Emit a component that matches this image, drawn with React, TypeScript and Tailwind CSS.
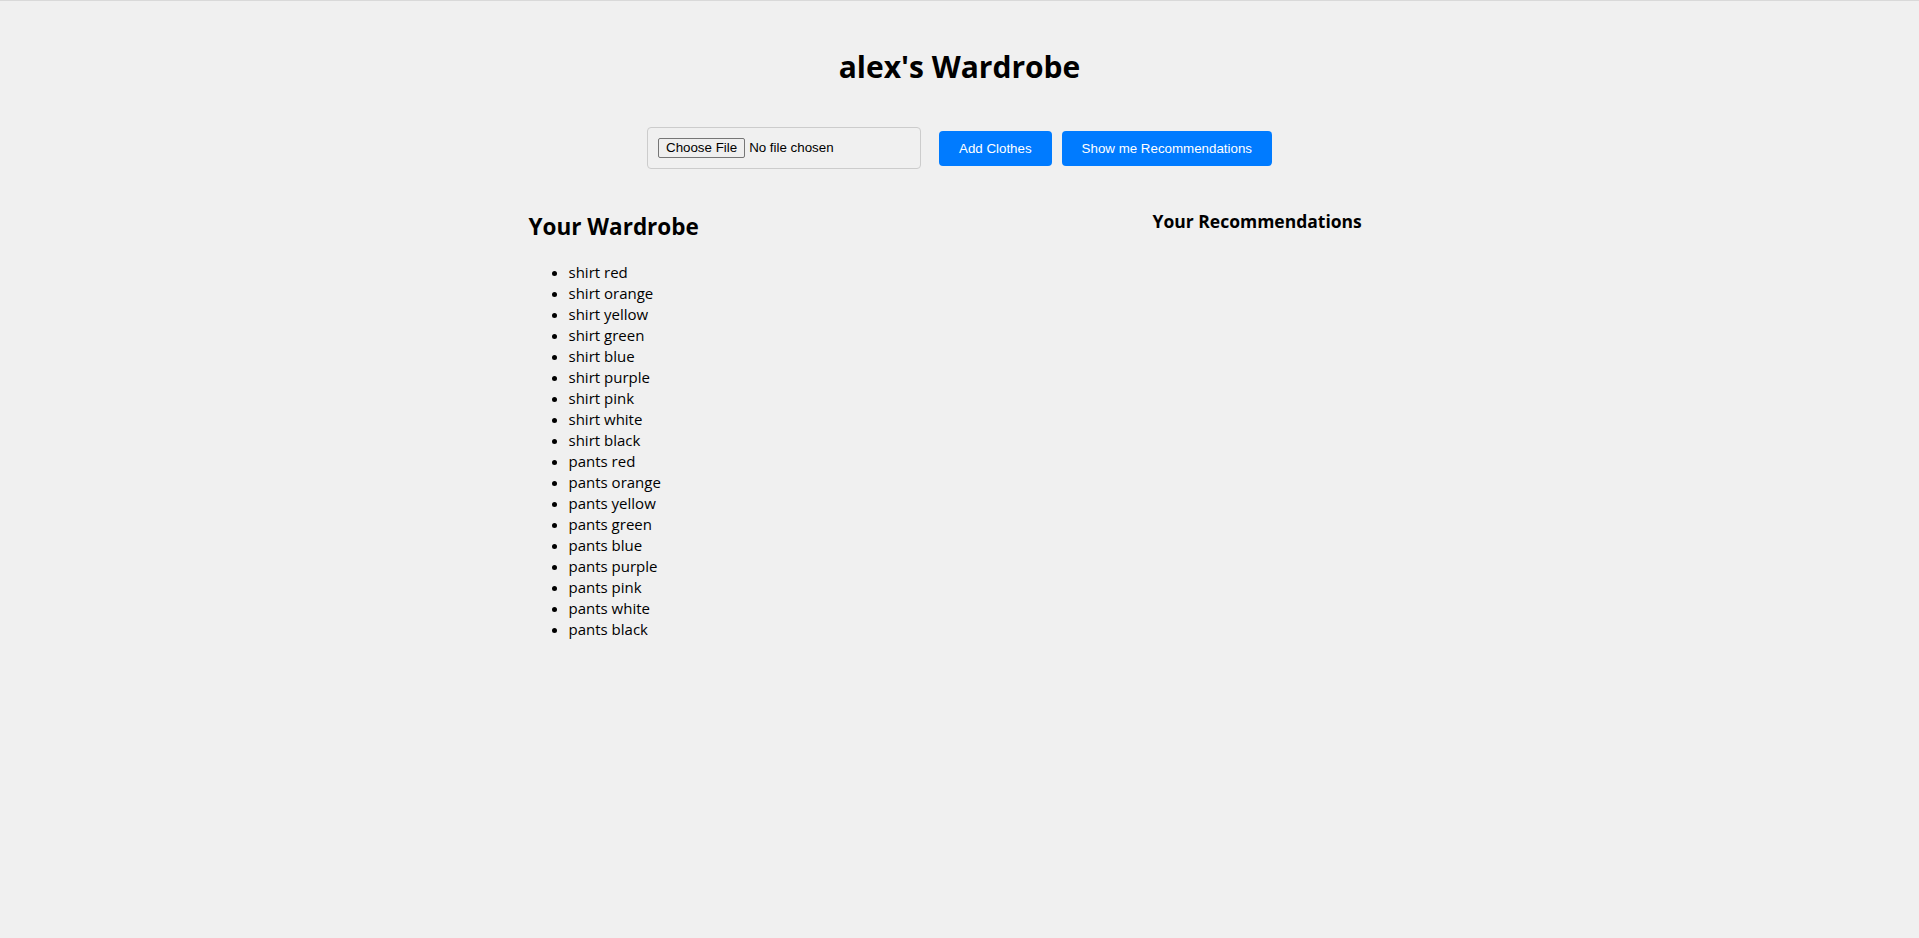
import React from 'react';

const wardrobe = [
  'shirt red',
  'shirt orange',
  'shirt yellow',
  'shirt green',
  'shirt blue',
  'shirt purple',
  'shirt pink',
  'shirt white',
  'shirt black',
  'pants red',
  'pants orange',
  'pants yellow',
  'pants green',
  'pants blue',
  'pants purple',
  'pants pink',
  'pants white',
  'pants black',
];

const App: React.FC = () => {
  return (
    <div className="min-h-screen bg-[#f0f0f0] border-t border-[#d9d9d9] font-['Open_Sans',sans-serif] text-black">
      <h1 className="pt-[44px] text-center text-[30px] leading-[44px] font-bold">alex's Wardrobe</h1>

      <div className="mt-[38px] flex items-center justify-center gap-[18px]">
        <div className="border border-[#cccccc] rounded-[4px] p-[10px]">
          <input
            type="file"
            className="block w-[252px] font-['Liberation_Sans',sans-serif] text-[13.33px] leading-[18px] file:mr-[4px] file:border file:border-solid file:border-[#767676] file:rounded-[2px] file:bg-[#efefef] file:px-[7px] file:py-0 file:text-black file:text-[13.33px]"
          />
        </div>
        <div className="flex gap-[10px]">
          <button
            type="button"
            className="bg-[#007bff] text-white rounded-[4px] px-5 py-[10px] text-[13.33px] leading-[15px] font-['Liberation_Sans',sans-serif]"
          >
            Add Clothes
          </button>
          <button
            type="button"
            className="bg-[#007bff] text-white rounded-[4px] px-5 py-[10px] text-[13.33px] leading-[15px] font-['Liberation_Sans',sans-serif]"
          >
            Show me Recommendations
          </button>
        </div>
      </div>

      <div className="mx-auto mt-[40px] flex w-[862px]">
        <div className="w-[624px]">
          <h2 className="mt-[2px] text-[22.5px] leading-[32px] font-bold">Your Wardrobe</h2>
          <ul className="mt-[19px] list-disc pl-10 text-[15px] leading-[21px]">
            {wardrobe.map((item) => (
              <li key={item}>{item}</li>
            ))}
          </ul>
        </div>
        <div>
          <h3 className="text-[17.5px] leading-[24px] font-bold">Your Recommendations</h3>
        </div>
      </div>
    </div>
  );
};

export default App;
